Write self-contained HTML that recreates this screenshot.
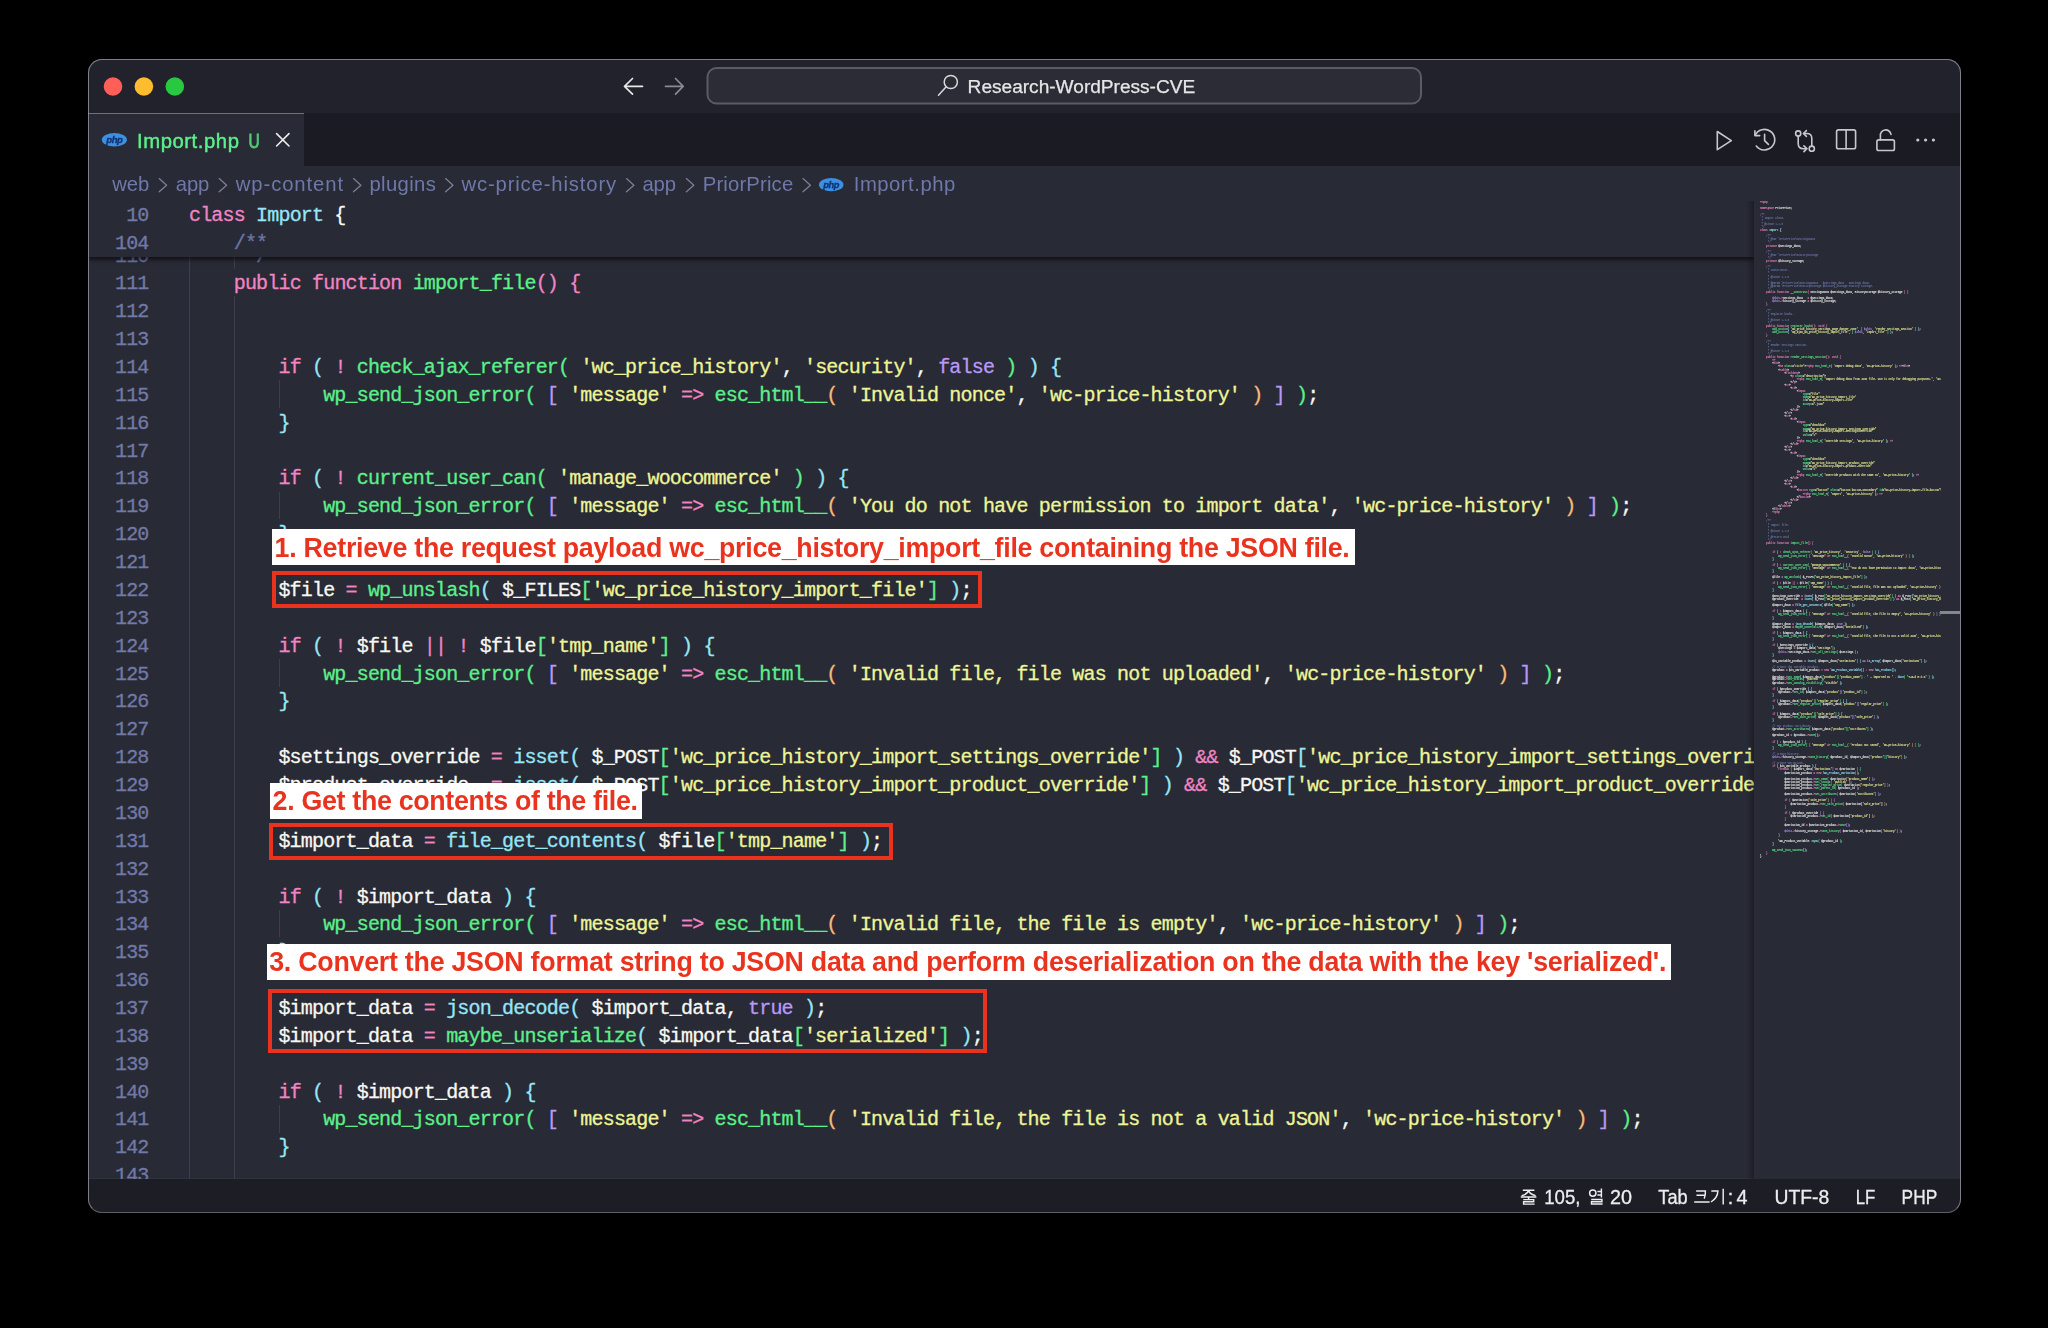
<!DOCTYPE html><html><head><meta charset="utf-8"><style>
html,body{margin:0;padding:0;background:#000;width:2048px;height:1328px;overflow:hidden}
#win{position:absolute;left:87.5px;top:59px;width:1873px;height:1154px;border-radius:14px;overflow:hidden;background:#282A36}
.abs{position:absolute}
.cl{position:absolute;left:101.50px;height:27.87px;line-height:27.87px;font-family:"Liberation Mono",monospace;font-size:20.000px;color:#F8F8F2;white-space:pre;letter-spacing:-0.822px;-webkit-text-stroke:0.3px currentColor}
.ln{position:absolute;width:60px;text-align:right;height:27.87px;line-height:27.87px;font-family:"Liberation Mono",monospace;font-size:20.000px;color:#7279A6;white-space:pre;letter-spacing:-0.822px;-webkit-text-stroke:0.3px currentColor}
svg{position:absolute;left:0;top:0}
</style></head><body>

<div id="win">
<div class="abs" style="left:0;top:0;width:1873px;height:54.3px;background:#21222C"></div>
<div class="abs" style="left:0;top:54.3px;width:1873px;height:53.0px;background:#1B1C23"></div>
<div class="abs" style="left:0;top:54.0px;width:216.5px;height:53.3px;background:#282A36;border-top:1.5px solid #9A5A88;box-sizing:border-box"></div>
<div class="abs" style="left:0;top:1120.2px;width:1873px;height:33.8px;background:#1C1D25"></div>
<div class="abs" style="left:0;top:1119.3px;width:1873px;height:1px;background:#30323D"></div>
</div>
<div id="editor" class="abs" style="left:88px;top:201.3px;width:1665.9px;height:977.9px;overflow:hidden">
<div class="abs" style="left:101.30px;top:-1.80px;width:1px;height:993.70px;background:#3B3E4F"></div>
<div class="abs" style="left:145.90px;top:39.43px;width:1px;height:27.87px;background:#3B3E4F"></div>
<div class="abs" style="left:145.90px;top:95.17px;width:1px;height:896.73px;background:#3B3E4F"></div>
<div class="abs" style="left:190.60px;top:178.78px;width:1px;height:27.87px;background:#3B3E4F"></div>
<div class="abs" style="left:190.60px;top:290.26px;width:1px;height:27.87px;background:#3B3E4F"></div>
<div class="abs" style="left:190.60px;top:457.48px;width:1px;height:27.87px;background:#3B3E4F"></div>
<div class="abs" style="left:190.60px;top:708.31px;width:1px;height:27.87px;background:#3B3E4F"></div>
<div class="abs" style="left:190.60px;top:903.40px;width:1px;height:27.87px;background:#3B3E4F"></div>
<div class="cl" style="left:101.00px;top:41.23px"><span style="color:#6C76A8">     */</span></div>
<div class="ln" style="left:0.50px;top:41.23px">110</div>
<div class="cl" style="left:101.00px;top:69.10px">    <span style="color:#F284C4">public</span> <span style="color:#F284C4">function</span> <span style="color:#5CF08A">import_file</span><span style="color:#F284C4">()</span> <span style="color:#F284C4">{</span></div>
<div class="ln" style="left:0.50px;top:69.10px">111</div>
<div class="cl" style="left:101.00px;top:96.97px"></div>
<div class="ln" style="left:0.50px;top:96.97px">112</div>
<div class="cl" style="left:101.00px;top:124.84px"></div>
<div class="ln" style="left:0.50px;top:124.84px">113</div>
<div class="cl" style="left:101.00px;top:152.71px">        <span style="color:#F284C4">if</span> <span style="color:#96E6F6">(</span> <span style="color:#F284C4">!</span> <span style="color:#5CF08A">check_ajax_referer(</span> <span style="color:#EEF597">&#x27;wc_price_history&#x27;</span>, <span style="color:#EEF597">&#x27;security&#x27;</span>, <span style="color:#BA98F6">false</span> <span style="color:#5CF08A">)</span> <span style="color:#96E6F6">)</span> <span style="color:#96E6F6">{</span></div>
<div class="ln" style="left:0.50px;top:152.71px">114</div>
<div class="cl" style="left:101.00px;top:180.58px">            <span style="color:#5CF08A">wp_send_json_error(</span> <span style="color:#BA98F6">[</span> <span style="color:#EEF597">&#x27;message&#x27;</span> <span style="color:#F284C4">=&gt;</span> <span style="color:#5CF08A">esc_html__</span><span style="color:#F9BA76">(</span> <span style="color:#EEF597">&#x27;Invalid nonce&#x27;</span>, <span style="color:#EEF597">&#x27;wc-price-history&#x27;</span> <span style="color:#F9BA76">)</span> <span style="color:#BA98F6">]</span> <span style="color:#5CF08A">)</span>;</div>
<div class="ln" style="left:0.50px;top:180.58px">115</div>
<div class="cl" style="left:101.00px;top:208.45px">        <span style="color:#96E6F6">}</span></div>
<div class="ln" style="left:0.50px;top:208.45px">116</div>
<div class="cl" style="left:101.00px;top:236.32px"></div>
<div class="ln" style="left:0.50px;top:236.32px">117</div>
<div class="cl" style="left:101.00px;top:264.19px">        <span style="color:#F284C4">if</span> <span style="color:#96E6F6">(</span> <span style="color:#F284C4">!</span> <span style="color:#5CF08A">current_user_can(</span> <span style="color:#EEF597">&#x27;manage_woocommerce&#x27;</span> <span style="color:#5CF08A">)</span> <span style="color:#96E6F6">)</span> <span style="color:#96E6F6">{</span></div>
<div class="ln" style="left:0.50px;top:264.19px">118</div>
<div class="cl" style="left:101.00px;top:292.06px">            <span style="color:#5CF08A">wp_send_json_error(</span> <span style="color:#BA98F6">[</span> <span style="color:#EEF597">&#x27;message&#x27;</span> <span style="color:#F284C4">=&gt;</span> <span style="color:#5CF08A">esc_html__</span><span style="color:#F9BA76">(</span> <span style="color:#EEF597">&#x27;You do not have permission to import data&#x27;</span>, <span style="color:#EEF597">&#x27;wc-price-history&#x27;</span> <span style="color:#F9BA76">)</span> <span style="color:#BA98F6">]</span> <span style="color:#5CF08A">)</span>;</div>
<div class="ln" style="left:0.50px;top:292.06px">119</div>
<div class="cl" style="left:101.00px;top:319.93px">        <span style="color:#96E6F6">}</span></div>
<div class="ln" style="left:0.50px;top:319.93px">120</div>
<div class="cl" style="left:101.00px;top:347.80px"></div>
<div class="ln" style="left:0.50px;top:347.80px">121</div>
<div class="cl" style="left:101.00px;top:375.67px">        $file <span style="color:#F284C4">=</span> <span style="color:#5CF08A">wp_unslash</span><span style="color:#96E6F6">(</span> $_FILES<span style="color:#5CF08A">[</span><span style="color:#EEF597">&#x27;wc_price_history_import_file&#x27;</span><span style="color:#5CF08A">]</span> <span style="color:#96E6F6">)</span>;</div>
<div class="ln" style="left:0.50px;top:375.67px">122</div>
<div class="cl" style="left:101.00px;top:403.54px"></div>
<div class="ln" style="left:0.50px;top:403.54px">123</div>
<div class="cl" style="left:101.00px;top:431.41px">        <span style="color:#F284C4">if</span> <span style="color:#96E6F6">(</span> <span style="color:#F284C4">!</span> $file <span style="color:#F284C4">||</span> <span style="color:#F284C4">!</span> $file<span style="color:#5CF08A">[</span><span style="color:#EEF597">&#x27;tmp_name&#x27;</span><span style="color:#5CF08A">]</span> <span style="color:#96E6F6">)</span> <span style="color:#96E6F6">{</span></div>
<div class="ln" style="left:0.50px;top:431.41px">124</div>
<div class="cl" style="left:101.00px;top:459.28px">            <span style="color:#5CF08A">wp_send_json_error(</span> <span style="color:#BA98F6">[</span> <span style="color:#EEF597">&#x27;message&#x27;</span> <span style="color:#F284C4">=&gt;</span> <span style="color:#5CF08A">esc_html__</span><span style="color:#F9BA76">(</span> <span style="color:#EEF597">&#x27;Invalid file, file was not uploaded&#x27;</span>, <span style="color:#EEF597">&#x27;wc-price-history&#x27;</span> <span style="color:#F9BA76">)</span> <span style="color:#BA98F6">]</span> <span style="color:#5CF08A">)</span>;</div>
<div class="ln" style="left:0.50px;top:459.28px">125</div>
<div class="cl" style="left:101.00px;top:487.15px">        <span style="color:#96E6F6">}</span></div>
<div class="ln" style="left:0.50px;top:487.15px">126</div>
<div class="cl" style="left:101.00px;top:515.02px"></div>
<div class="ln" style="left:0.50px;top:515.02px">127</div>
<div class="cl" style="left:101.00px;top:542.89px">        $settings_override <span style="color:#F284C4">=</span> <span style="color:#96E6F6">isset(</span> $_POST<span style="color:#5CF08A">[</span><span style="color:#EEF597">&#x27;wc_price_history_import_settings_override&#x27;</span><span style="color:#5CF08A">]</span> <span style="color:#96E6F6">)</span> <span style="color:#F284C4">&amp;&amp;</span> $_POST<span style="color:#96E6F6">[</span><span style="color:#EEF597">&#x27;wc_price_history_import_settings_override&#x27;</span><span style="color:#96E6F6">]</span> <span style="color:#F284C4">===</span> <span style="color:#EEF597">&#x27;1&#x27;</span>;</div>
<div class="ln" style="left:0.50px;top:542.89px">128</div>
<div class="cl" style="left:101.00px;top:570.76px">        $product_override  <span style="color:#F284C4">=</span> <span style="color:#96E6F6">isset(</span> $_POST<span style="color:#5CF08A">[</span><span style="color:#EEF597">&#x27;wc_price_history_import_product_override&#x27;</span><span style="color:#5CF08A">]</span> <span style="color:#96E6F6">)</span> <span style="color:#F284C4">&amp;&amp;</span> $_POST<span style="color:#96E6F6">[</span><span style="color:#EEF597">&#x27;wc_price_history_import_product_override&#x27;</span><span style="color:#96E6F6">]</span> <span style="color:#F284C4">===</span> <span style="color:#EEF597">&#x27;1&#x27;</span>;</div>
<div class="ln" style="left:0.50px;top:570.76px">129</div>
<div class="cl" style="left:101.00px;top:598.63px"></div>
<div class="ln" style="left:0.50px;top:598.63px">130</div>
<div class="cl" style="left:101.00px;top:626.50px">        $import_data <span style="color:#F284C4">=</span> <span style="color:#96E6F6">file_get_contents(</span> $file<span style="color:#5CF08A">[</span><span style="color:#EEF597">&#x27;tmp_name&#x27;</span><span style="color:#5CF08A">]</span> <span style="color:#96E6F6">)</span>;</div>
<div class="ln" style="left:0.50px;top:626.50px">131</div>
<div class="cl" style="left:101.00px;top:654.37px"></div>
<div class="ln" style="left:0.50px;top:654.37px">132</div>
<div class="cl" style="left:101.00px;top:682.24px">        <span style="color:#F284C4">if</span> <span style="color:#96E6F6">(</span> <span style="color:#F284C4">!</span> $import_data <span style="color:#96E6F6">)</span> <span style="color:#96E6F6">{</span></div>
<div class="ln" style="left:0.50px;top:682.24px">133</div>
<div class="cl" style="left:101.00px;top:710.11px">            <span style="color:#5CF08A">wp_send_json_error(</span> <span style="color:#BA98F6">[</span> <span style="color:#EEF597">&#x27;message&#x27;</span> <span style="color:#F284C4">=&gt;</span> <span style="color:#5CF08A">esc_html__</span><span style="color:#F9BA76">(</span> <span style="color:#EEF597">&#x27;Invalid file, the file is empty&#x27;</span>, <span style="color:#EEF597">&#x27;wc-price-history&#x27;</span> <span style="color:#F9BA76">)</span> <span style="color:#BA98F6">]</span> <span style="color:#5CF08A">)</span>;</div>
<div class="ln" style="left:0.50px;top:710.11px">134</div>
<div class="cl" style="left:101.00px;top:737.98px">        <span style="color:#96E6F6">}</span></div>
<div class="ln" style="left:0.50px;top:737.98px">135</div>
<div class="cl" style="left:101.00px;top:765.85px"></div>
<div class="ln" style="left:0.50px;top:765.85px">136</div>
<div class="cl" style="left:101.00px;top:793.72px">        $import_data <span style="color:#F284C4">=</span> <span style="color:#96E6F6">json_decode(</span> $import_data, <span style="color:#BA98F6">true</span> <span style="color:#96E6F6">)</span>;</div>
<div class="ln" style="left:0.50px;top:793.72px">137</div>
<div class="cl" style="left:101.00px;top:821.59px">        $import_data <span style="color:#F284C4">=</span> <span style="color:#5CF08A">maybe_unserialize</span><span style="color:#96E6F6">(</span> $import_data<span style="color:#5CF08A">[</span><span style="color:#EEF597">&#x27;serialized&#x27;</span><span style="color:#5CF08A">]</span> <span style="color:#96E6F6">)</span>;</div>
<div class="ln" style="left:0.50px;top:821.59px">138</div>
<div class="cl" style="left:101.00px;top:849.46px"></div>
<div class="ln" style="left:0.50px;top:849.46px">139</div>
<div class="cl" style="left:101.00px;top:877.33px">        <span style="color:#F284C4">if</span> <span style="color:#96E6F6">(</span> <span style="color:#F284C4">!</span> $import_data <span style="color:#96E6F6">)</span> <span style="color:#96E6F6">{</span></div>
<div class="ln" style="left:0.50px;top:877.33px">140</div>
<div class="cl" style="left:101.00px;top:905.20px">            <span style="color:#5CF08A">wp_send_json_error(</span> <span style="color:#BA98F6">[</span> <span style="color:#EEF597">&#x27;message&#x27;</span> <span style="color:#F284C4">=&gt;</span> <span style="color:#5CF08A">esc_html__</span><span style="color:#F9BA76">(</span> <span style="color:#EEF597">&#x27;Invalid file, the file is not a valid JSON&#x27;</span>, <span style="color:#EEF597">&#x27;wc-price-history&#x27;</span> <span style="color:#F9BA76">)</span> <span style="color:#BA98F6">]</span> <span style="color:#5CF08A">)</span>;</div>
<div class="ln" style="left:0.50px;top:905.20px">141</div>
<div class="cl" style="left:101.00px;top:933.07px">        <span style="color:#96E6F6">}</span></div>
<div class="ln" style="left:0.50px;top:933.07px">142</div>
<div class="cl" style="left:101.00px;top:960.94px"></div>
<div class="ln" style="left:0.50px;top:960.94px">143</div>
<div class="abs" style="left:0;top:0;width:1665.9px;height:55.7px;background:#282A36;box-shadow:0 3px 4px rgba(0,0,0,0.55)"></div>
<div class="cl" style="left:101.00px;top:0.80px"><span style="color:#F284C4">class</span> <span style="color:#96E6F6">Import</span> {</div>
<div class="ln" style="left:0.50px;top:0.80px">10</div>
<div class="cl" style="left:101.00px;top:28.65px">    <span style="color:#6C76A8">/**</span></div>
<div class="ln" style="left:0.50px;top:28.65px">104</div>
</div>
<div class="abs" style="left:1753.9px;top:201.3px;width:187.1px;height:977.9px;background:#282A36;overflow:hidden">
<div class="abs" style="left:6.10px;top:-1.68px;width:1300px;transform-origin:0 0;opacity:0.85;transform:scale(0.13685,0.16500)">
<div class="cl" style="left:0;top:0.00px;-webkit-text-stroke:1px currentColor"><span style="color:#F284C4">&lt;?php</span></div>
<div class="cl" style="left:0;top:18.79px;-webkit-text-stroke:1px currentColor"></div>
<div class="cl" style="left:0;top:37.58px;-webkit-text-stroke:1px currentColor"><span style="color:#F284C4">namespace</span> PriorPrice;</div>
<div class="cl" style="left:0;top:56.36px;-webkit-text-stroke:1px currentColor"></div>
<div class="cl" style="left:0;top:75.15px;-webkit-text-stroke:1px currentColor"><span style="color:#6C76A8">/**</span></div>
<div class="cl" style="left:0;top:93.94px;-webkit-text-stroke:1px currentColor"><span style="color:#6C76A8"> * Import class.</span></div>
<div class="cl" style="left:0;top:112.73px;-webkit-text-stroke:1px currentColor"><span style="color:#6C76A8"> *</span></div>
<div class="cl" style="left:0;top:131.52px;-webkit-text-stroke:1px currentColor"><span style="color:#6C76A8"> * @since 1.1.0</span></div>
<div class="cl" style="left:0;top:150.30px;-webkit-text-stroke:1px currentColor"><span style="color:#6C76A8"> */</span></div>
<div class="cl" style="left:0;top:169.09px;-webkit-text-stroke:1px currentColor"><span style="color:#F284C4">class</span> <span style="color:#96E6F6">Import</span> {</div>
<div class="cl" style="left:0;top:187.88px;-webkit-text-stroke:1px currentColor"></div>
<div class="cl" style="left:0;top:206.67px;-webkit-text-stroke:1px currentColor">    <span style="color:#6C76A8">/**</span></div>
<div class="cl" style="left:0;top:225.45px;-webkit-text-stroke:1px currentColor"><span style="color:#6C76A8">     * @var \PriorPrice\SettingsData</span></div>
<div class="cl" style="left:0;top:244.24px;-webkit-text-stroke:1px currentColor"><span style="color:#6C76A8">     */</span></div>
<div class="cl" style="left:0;top:263.03px;-webkit-text-stroke:1px currentColor">    <span style="color:#F284C4">private</span> $settings_data;</div>
<div class="cl" style="left:0;top:281.82px;-webkit-text-stroke:1px currentColor"></div>
<div class="cl" style="left:0;top:300.61px;-webkit-text-stroke:1px currentColor">    <span style="color:#6C76A8">/**</span></div>
<div class="cl" style="left:0;top:319.39px;-webkit-text-stroke:1px currentColor"><span style="color:#6C76A8">     * @var \PriorPrice\HistoryStorage</span></div>
<div class="cl" style="left:0;top:338.18px;-webkit-text-stroke:1px currentColor"><span style="color:#6C76A8">     */</span></div>
<div class="cl" style="left:0;top:356.97px;-webkit-text-stroke:1px currentColor">    <span style="color:#F284C4">private</span> $history_storage;</div>
<div class="cl" style="left:0;top:375.76px;-webkit-text-stroke:1px currentColor"></div>
<div class="cl" style="left:0;top:394.55px;-webkit-text-stroke:1px currentColor">    <span style="color:#6C76A8">/**</span></div>
<div class="cl" style="left:0;top:413.33px;-webkit-text-stroke:1px currentColor"><span style="color:#6C76A8">     * Constructor.</span></div>
<div class="cl" style="left:0;top:432.12px;-webkit-text-stroke:1px currentColor"><span style="color:#6C76A8">     *</span></div>
<div class="cl" style="left:0;top:450.91px;-webkit-text-stroke:1px currentColor"><span style="color:#6C76A8">     * @since 1.1.0</span></div>
<div class="cl" style="left:0;top:469.70px;-webkit-text-stroke:1px currentColor"><span style="color:#6C76A8">     *</span></div>
<div class="cl" style="left:0;top:488.48px;-webkit-text-stroke:1px currentColor"><span style="color:#6C76A8">     * @param \PriorPrice\SettingsData   $settings_data   Settings data.</span></div>
<div class="cl" style="left:0;top:507.27px;-webkit-text-stroke:1px currentColor"><span style="color:#6C76A8">     * @param \PriorPrice\HistoryStorage $history_storage History storage.</span></div>
<div class="cl" style="left:0;top:526.06px;-webkit-text-stroke:1px currentColor"><span style="color:#6C76A8">     */</span></div>
<div class="cl" style="left:0;top:544.85px;-webkit-text-stroke:1px currentColor">    <span style="color:#F284C4">public</span> <span style="color:#F284C4">function</span> <span style="color:#5CF08A">__construct</span><span style="color:#F284C4">(</span> SettingsData $settings_data, HistoryStorage $history_storage <span style="color:#F284C4">)</span> <span style="color:#F284C4">{</span></div>
<div class="cl" style="left:0;top:563.64px;-webkit-text-stroke:1px currentColor"></div>
<div class="cl" style="left:0;top:582.42px;-webkit-text-stroke:1px currentColor">        <span style="color:#BA98F6">$this</span><span style="color:#F284C4">-&gt;</span>settings_data   <span style="color:#F284C4">=</span> $settings_data;</div>
<div class="cl" style="left:0;top:601.21px;-webkit-text-stroke:1px currentColor">        <span style="color:#BA98F6">$this</span><span style="color:#F284C4">-&gt;</span>history_storage <span style="color:#F284C4">=</span> $history_storage;</div>
<div class="cl" style="left:0;top:620.00px;-webkit-text-stroke:1px currentColor">    <span style="color:#F284C4">}</span></div>
<div class="cl" style="left:0;top:638.79px;-webkit-text-stroke:1px currentColor"></div>
<div class="cl" style="left:0;top:657.58px;-webkit-text-stroke:1px currentColor">    <span style="color:#6C76A8">/**</span></div>
<div class="cl" style="left:0;top:676.36px;-webkit-text-stroke:1px currentColor"><span style="color:#6C76A8">     * Register hooks.</span></div>
<div class="cl" style="left:0;top:695.15px;-webkit-text-stroke:1px currentColor"><span style="color:#6C76A8">     *</span></div>
<div class="cl" style="left:0;top:713.94px;-webkit-text-stroke:1px currentColor"><span style="color:#6C76A8">     * @since 1.1.0</span></div>
<div class="cl" style="left:0;top:732.73px;-webkit-text-stroke:1px currentColor"><span style="color:#6C76A8">     */</span></div>
<div class="cl" style="left:0;top:751.52px;-webkit-text-stroke:1px currentColor">    <span style="color:#F284C4">public</span> <span style="color:#F284C4">function</span> <span style="color:#5CF08A">register_hooks</span><span style="color:#F284C4">():</span> <span style="color:#F284C4">void</span> <span style="color:#F284C4">{</span></div>
<div class="cl" style="left:0;top:770.30px;-webkit-text-stroke:1px currentColor">        <span style="color:#5CF08A">add_action</span><span style="color:#96E6F6">(</span> <span style="color:#EEF597">&#x27;wc_price_history_settings_page_danger_zone&#x27;</span>, <span style="color:#5CF08A">[</span> <span style="color:#BA98F6">$this</span>, <span style="color:#EEF597">&#x27;render_settings_section&#x27;</span> <span style="color:#5CF08A">]</span> <span style="color:#96E6F6">)</span>;</div>
<div class="cl" style="left:0;top:789.09px;-webkit-text-stroke:1px currentColor">        <span style="color:#5CF08A">add_action</span><span style="color:#96E6F6">(</span> <span style="color:#EEF597">&#x27;wp_ajax_wc_price_history_import_file&#x27;</span>, <span style="color:#5CF08A">[</span> <span style="color:#BA98F6">$this</span>, <span style="color:#EEF597">&#x27;import_file&#x27;</span> <span style="color:#5CF08A">]</span> <span style="color:#96E6F6">)</span>;</div>
<div class="cl" style="left:0;top:807.88px;-webkit-text-stroke:1px currentColor">    <span style="color:#F284C4">}</span></div>
<div class="cl" style="left:0;top:826.67px;-webkit-text-stroke:1px currentColor"></div>
<div class="cl" style="left:0;top:845.45px;-webkit-text-stroke:1px currentColor">    <span style="color:#6C76A8">/**</span></div>
<div class="cl" style="left:0;top:864.24px;-webkit-text-stroke:1px currentColor"><span style="color:#6C76A8">     * Render settings section.</span></div>
<div class="cl" style="left:0;top:883.03px;-webkit-text-stroke:1px currentColor"><span style="color:#6C76A8">     *</span></div>
<div class="cl" style="left:0;top:901.82px;-webkit-text-stroke:1px currentColor"><span style="color:#6C76A8">     * @since 1.1.0</span></div>
<div class="cl" style="left:0;top:920.61px;-webkit-text-stroke:1px currentColor"><span style="color:#6C76A8">     */</span></div>
<div class="cl" style="left:0;top:939.39px;-webkit-text-stroke:1px currentColor">    <span style="color:#F284C4">public</span> <span style="color:#F284C4">function</span> <span style="color:#5CF08A">render_settings_section</span><span style="color:#F284C4">():</span> <span style="color:#F284C4">void</span> <span style="color:#F284C4">{</span></div>
<div class="cl" style="left:0;top:958.18px;-webkit-text-stroke:1px currentColor">        <span style="color:#F284C4">?&gt;</span></div>
<div class="cl" style="left:0;top:976.97px;-webkit-text-stroke:1px currentColor">        &lt;<span style="color:#F284C4">div</span>&gt;</div>
<div class="cl" style="left:0;top:995.76px;-webkit-text-stroke:1px currentColor">            &lt;<span style="color:#F284C4">h3</span> <span style="color:#5CF08A">class</span>=<span style="color:#EEF597">&quot;title&quot;</span>&gt;<span style="color:#F284C4">&lt;?php</span> <span style="color:#5CF08A">esc_html_e</span><span style="color:#96E6F6">(</span> <span style="color:#EEF597">&#x27;Import debug data&#x27;</span>, <span style="color:#EEF597">&#x27;wc-price-history&#x27;</span> <span style="color:#96E6F6">)</span>; <span style="color:#F284C4">?&gt;</span>&lt;/<span style="color:#F284C4">h3</span>&gt;</div>
<div class="cl" style="left:0;top:1014.55px;-webkit-text-stroke:1px currentColor">            &lt;<span style="color:#F284C4">table</span>&gt;</div>
<div class="cl" style="left:0;top:1033.33px;-webkit-text-stroke:1px currentColor">                &lt;<span style="color:#F284C4">fieldset</span>&gt;</div>
<div class="cl" style="left:0;top:1052.12px;-webkit-text-stroke:1px currentColor">                    &lt;<span style="color:#F284C4">p</span> <span style="color:#5CF08A">class</span>=<span style="color:#EEF597">&quot;description&quot;</span>&gt;</div>
<div class="cl" style="left:0;top:1070.91px;-webkit-text-stroke:1px currentColor">                        <span style="color:#F284C4">&lt;?php</span> <span style="color:#5CF08A">esc_html_e</span><span style="color:#96E6F6">(</span> <span style="color:#EEF597">&#x27;Import debug data from JSON file. Use it only for debugging purposes.&#x27;</span>, <span style="color:#EEF597">&#x27;wc-price-history&#x27;</span> <span style="color:#96E6F6">)</span>; <span style="color:#F284C4">?&gt;</span></div>
<div class="cl" style="left:0;top:1089.70px;-webkit-text-stroke:1px currentColor">                    &lt;/<span style="color:#F284C4">p</span>&gt;</div>
<div class="cl" style="left:0;top:1108.48px;-webkit-text-stroke:1px currentColor">                &lt;<span style="color:#F284C4">tr</span>&gt;</div>
<div class="cl" style="left:0;top:1127.27px;-webkit-text-stroke:1px currentColor">                    &lt;<span style="color:#F284C4">td</span>&gt;</div>
<div class="cl" style="left:0;top:1146.06px;-webkit-text-stroke:1px currentColor">                        &lt;<span style="color:#F284C4">input</span></div>
<div class="cl" style="left:0;top:1164.85px;-webkit-text-stroke:1px currentColor">                            <span style="color:#5CF08A">type</span>=<span style="color:#EEF597">&quot;file&quot;</span></div>
<div class="cl" style="left:0;top:1183.64px;-webkit-text-stroke:1px currentColor">                            <span style="color:#5CF08A">name</span>=<span style="color:#EEF597">&quot;wc_price_history_import_file&quot;</span></div>
<div class="cl" style="left:0;top:1202.42px;-webkit-text-stroke:1px currentColor">                            <span style="color:#5CF08A">id</span>=<span style="color:#EEF597">&quot;wc-price-history-import-file&quot;</span></div>
<div class="cl" style="left:0;top:1221.21px;-webkit-text-stroke:1px currentColor">                            <span style="color:#5CF08A">accept</span>=<span style="color:#EEF597">&quot;.json&quot;</span></div>
<div class="cl" style="left:0;top:1240.00px;-webkit-text-stroke:1px currentColor">                        /&gt;</div>
<div class="cl" style="left:0;top:1258.79px;-webkit-text-stroke:1px currentColor">                    &lt;/<span style="color:#F284C4">td</span>&gt;</div>
<div class="cl" style="left:0;top:1277.58px;-webkit-text-stroke:1px currentColor">                &lt;/<span style="color:#F284C4">tr</span>&gt;</div>
<div class="cl" style="left:0;top:1296.36px;-webkit-text-stroke:1px currentColor">                &lt;<span style="color:#F284C4">tr</span>&gt;</div>
<div class="cl" style="left:0;top:1315.15px;-webkit-text-stroke:1px currentColor">                    &lt;<span style="color:#F284C4">td</span>&gt;</div>
<div class="cl" style="left:0;top:1333.94px;-webkit-text-stroke:1px currentColor">                        &lt;<span style="color:#F284C4">input</span></div>
<div class="cl" style="left:0;top:1352.73px;-webkit-text-stroke:1px currentColor">                            <span style="color:#5CF08A">type</span>=<span style="color:#EEF597">&quot;checkbox&quot;</span></div>
<div class="cl" style="left:0;top:1371.52px;-webkit-text-stroke:1px currentColor">                            <span style="color:#5CF08A">name</span>=<span style="color:#EEF597">&quot;wc_price_history_import_settings_override&quot;</span></div>
<div class="cl" style="left:0;top:1390.30px;-webkit-text-stroke:1px currentColor">                            <span style="color:#5CF08A">id</span>=<span style="color:#EEF597">&quot;wc-price-history-import-settings-override&quot;</span></div>
<div class="cl" style="left:0;top:1409.09px;-webkit-text-stroke:1px currentColor">                            <span style="color:#5CF08A">value</span>=<span style="color:#EEF597">&quot;1&quot;</span></div>
<div class="cl" style="left:0;top:1427.88px;-webkit-text-stroke:1px currentColor">                        /&gt;</div>
<div class="cl" style="left:0;top:1446.67px;-webkit-text-stroke:1px currentColor">                        <span style="color:#F284C4">&lt;?php</span> <span style="color:#5CF08A">esc_html_e</span><span style="color:#96E6F6">(</span> <span style="color:#EEF597">&#x27;Override settings&#x27;</span>, <span style="color:#EEF597">&#x27;wc-price-history&#x27;</span> <span style="color:#96E6F6">)</span>; <span style="color:#F284C4">?&gt;</span></div>
<div class="cl" style="left:0;top:1465.45px;-webkit-text-stroke:1px currentColor">                    &lt;/<span style="color:#F284C4">td</span>&gt;</div>
<div class="cl" style="left:0;top:1484.24px;-webkit-text-stroke:1px currentColor">                &lt;/<span style="color:#F284C4">tr</span>&gt;</div>
<div class="cl" style="left:0;top:1503.03px;-webkit-text-stroke:1px currentColor">                &lt;<span style="color:#F284C4">tr</span>&gt;</div>
<div class="cl" style="left:0;top:1521.82px;-webkit-text-stroke:1px currentColor">                    &lt;<span style="color:#F284C4">td</span>&gt;</div>
<div class="cl" style="left:0;top:1540.61px;-webkit-text-stroke:1px currentColor">                        &lt;<span style="color:#F284C4">input</span></div>
<div class="cl" style="left:0;top:1559.39px;-webkit-text-stroke:1px currentColor">                            <span style="color:#5CF08A">type</span>=<span style="color:#EEF597">&quot;checkbox&quot;</span></div>
<div class="cl" style="left:0;top:1578.18px;-webkit-text-stroke:1px currentColor">                            <span style="color:#5CF08A">name</span>=<span style="color:#EEF597">&quot;wc_price_history_import_product_override&quot;</span></div>
<div class="cl" style="left:0;top:1596.97px;-webkit-text-stroke:1px currentColor">                            <span style="color:#5CF08A">id</span>=<span style="color:#EEF597">&quot;wc-price-history-import-product-override&quot;</span></div>
<div class="cl" style="left:0;top:1615.76px;-webkit-text-stroke:1px currentColor">                            <span style="color:#5CF08A">value</span>=<span style="color:#EEF597">&quot;1&quot;</span></div>
<div class="cl" style="left:0;top:1634.55px;-webkit-text-stroke:1px currentColor">                        /&gt;</div>
<div class="cl" style="left:0;top:1653.33px;-webkit-text-stroke:1px currentColor">                        <span style="color:#F284C4">&lt;?php</span> <span style="color:#5CF08A">esc_html_e</span><span style="color:#96E6F6">(</span> <span style="color:#EEF597">&#x27;Override products with the same ID&#x27;</span>, <span style="color:#EEF597">&#x27;wc-price-history&#x27;</span> <span style="color:#96E6F6">)</span>; <span style="color:#F284C4">?&gt;</span></div>
<div class="cl" style="left:0;top:1672.12px;-webkit-text-stroke:1px currentColor">                    &lt;/<span style="color:#F284C4">td</span>&gt;</div>
<div class="cl" style="left:0;top:1690.91px;-webkit-text-stroke:1px currentColor">                &lt;/<span style="color:#F284C4">tr</span>&gt;</div>
<div class="cl" style="left:0;top:1709.70px;-webkit-text-stroke:1px currentColor">                &lt;<span style="color:#F284C4">tr</span>&gt;</div>
<div class="cl" style="left:0;top:1728.48px;-webkit-text-stroke:1px currentColor">                    &lt;<span style="color:#F284C4">td</span>&gt;</div>
<div class="cl" style="left:0;top:1747.27px;-webkit-text-stroke:1px currentColor">                        &lt;<span style="color:#F284C4">button</span> <span style="color:#5CF08A">type</span>=<span style="color:#EEF597">&quot;button&quot;</span> <span style="color:#5CF08A">class</span>=<span style="color:#EEF597">&quot;button button-secondary&quot;</span> <span style="color:#5CF08A">id</span>=<span style="color:#EEF597">&quot;wc-price-history-import-file-button&quot;</span>&gt;</div>
<div class="cl" style="left:0;top:1766.06px;-webkit-text-stroke:1px currentColor">                            <span style="color:#F284C4">&lt;?php</span> <span style="color:#5CF08A">esc_html_e</span><span style="color:#96E6F6">(</span> <span style="color:#EEF597">&#x27;Import&#x27;</span>, <span style="color:#EEF597">&#x27;wc-price-history&#x27;</span> <span style="color:#96E6F6">)</span>; <span style="color:#F284C4">?&gt;</span></div>
<div class="cl" style="left:0;top:1784.85px;-webkit-text-stroke:1px currentColor">                        &lt;/<span style="color:#F284C4">button</span>&gt;</div>
<div class="cl" style="left:0;top:1803.64px;-webkit-text-stroke:1px currentColor">                    &lt;/<span style="color:#F284C4">td</span>&gt;</div>
<div class="cl" style="left:0;top:1822.42px;-webkit-text-stroke:1px currentColor">                &lt;/<span style="color:#F284C4">tr</span>&gt;</div>
<div class="cl" style="left:0;top:1841.21px;-webkit-text-stroke:1px currentColor">            &lt;/<span style="color:#F284C4">table</span>&gt;</div>
<div class="cl" style="left:0;top:1860.00px;-webkit-text-stroke:1px currentColor">        &lt;/<span style="color:#F284C4">div</span>&gt;</div>
<div class="cl" style="left:0;top:1878.79px;-webkit-text-stroke:1px currentColor">        <span style="color:#F284C4">&lt;?php</span></div>
<div class="cl" style="left:0;top:1897.58px;-webkit-text-stroke:1px currentColor">    <span style="color:#F284C4">}</span></div>
<div class="cl" style="left:0;top:1916.36px;-webkit-text-stroke:1px currentColor"></div>
<div class="cl" style="left:0;top:1935.15px;-webkit-text-stroke:1px currentColor">    <span style="color:#6C76A8">/**</span></div>
<div class="cl" style="left:0;top:1953.94px;-webkit-text-stroke:1px currentColor"><span style="color:#6C76A8">     * Import file.</span></div>
<div class="cl" style="left:0;top:1972.73px;-webkit-text-stroke:1px currentColor"><span style="color:#6C76A8">     *</span></div>
<div class="cl" style="left:0;top:1991.52px;-webkit-text-stroke:1px currentColor"><span style="color:#6C76A8">     * @since 1.1.0</span></div>
<div class="cl" style="left:0;top:2010.30px;-webkit-text-stroke:1px currentColor"><span style="color:#6C76A8">     *</span></div>
<div class="cl" style="left:0;top:2029.09px;-webkit-text-stroke:1px currentColor"><span style="color:#6C76A8">     * @return void</span></div>
<div class="cl" style="left:0;top:2047.88px;-webkit-text-stroke:1px currentColor"><span style="color:#6C76A8">     */</span></div>
<div class="cl" style="left:0;top:2066.67px;-webkit-text-stroke:1px currentColor">    <span style="color:#F284C4">public</span> <span style="color:#F284C4">function</span> <span style="color:#5CF08A">import_file</span><span style="color:#F284C4">()</span> <span style="color:#F284C4">{</span></div>
<div class="cl" style="left:0;top:2085.45px;-webkit-text-stroke:1px currentColor"></div>
<div class="cl" style="left:0;top:2104.24px;-webkit-text-stroke:1px currentColor"></div>
<div class="cl" style="left:0;top:2123.03px;-webkit-text-stroke:1px currentColor">        <span style="color:#F284C4">if</span> <span style="color:#96E6F6">(</span> <span style="color:#F284C4">!</span> <span style="color:#5CF08A">check_ajax_referer(</span> <span style="color:#EEF597">&#x27;wc_price_history&#x27;</span>, <span style="color:#EEF597">&#x27;security&#x27;</span>, <span style="color:#BA98F6">false</span> <span style="color:#5CF08A">)</span> <span style="color:#96E6F6">)</span> <span style="color:#96E6F6">{</span></div>
<div class="cl" style="left:0;top:2141.82px;-webkit-text-stroke:1px currentColor">            <span style="color:#5CF08A">wp_send_json_error(</span> <span style="color:#BA98F6">[</span> <span style="color:#EEF597">&#x27;message&#x27;</span> <span style="color:#F284C4">=&gt;</span> <span style="color:#5CF08A">esc_html__</span><span style="color:#F9BA76">(</span> <span style="color:#EEF597">&#x27;Invalid nonce&#x27;</span>, <span style="color:#EEF597">&#x27;wc-price-history&#x27;</span> <span style="color:#F9BA76">)</span> <span style="color:#BA98F6">]</span> <span style="color:#5CF08A">)</span>;</div>
<div class="cl" style="left:0;top:2160.61px;-webkit-text-stroke:1px currentColor">        <span style="color:#96E6F6">}</span></div>
<div class="cl" style="left:0;top:2179.39px;-webkit-text-stroke:1px currentColor"></div>
<div class="cl" style="left:0;top:2198.18px;-webkit-text-stroke:1px currentColor">        <span style="color:#F284C4">if</span> <span style="color:#96E6F6">(</span> <span style="color:#F284C4">!</span> <span style="color:#5CF08A">current_user_can(</span> <span style="color:#EEF597">&#x27;manage_woocommerce&#x27;</span> <span style="color:#5CF08A">)</span> <span style="color:#96E6F6">)</span> <span style="color:#96E6F6">{</span></div>
<div class="cl" style="left:0;top:2216.97px;-webkit-text-stroke:1px currentColor">            <span style="color:#5CF08A">wp_send_json_error(</span> <span style="color:#BA98F6">[</span> <span style="color:#EEF597">&#x27;message&#x27;</span> <span style="color:#F284C4">=&gt;</span> <span style="color:#5CF08A">esc_html__</span><span style="color:#F9BA76">(</span> <span style="color:#EEF597">&#x27;You do not have permission to import data&#x27;</span>, <span style="color:#EEF597">&#x27;wc-price-history&#x27;</span> <span style="color:#F9BA76">)</span> <span style="color:#BA98F6">]</span> <span style="color:#5CF08A">)</span>;</div>
<div class="cl" style="left:0;top:2235.76px;-webkit-text-stroke:1px currentColor">        <span style="color:#96E6F6">}</span></div>
<div class="cl" style="left:0;top:2254.55px;-webkit-text-stroke:1px currentColor"></div>
<div class="cl" style="left:0;top:2273.33px;-webkit-text-stroke:1px currentColor">        $file <span style="color:#F284C4">=</span> <span style="color:#5CF08A">wp_unslash</span><span style="color:#96E6F6">(</span> $_FILES<span style="color:#5CF08A">[</span><span style="color:#EEF597">&#x27;wc_price_history_import_file&#x27;</span><span style="color:#5CF08A">]</span> <span style="color:#96E6F6">)</span>;</div>
<div class="cl" style="left:0;top:2292.12px;-webkit-text-stroke:1px currentColor"></div>
<div class="cl" style="left:0;top:2310.91px;-webkit-text-stroke:1px currentColor">        <span style="color:#F284C4">if</span> <span style="color:#96E6F6">(</span> <span style="color:#F284C4">!</span> $file <span style="color:#F284C4">||</span> <span style="color:#F284C4">!</span> $file<span style="color:#5CF08A">[</span><span style="color:#EEF597">&#x27;tmp_name&#x27;</span><span style="color:#5CF08A">]</span> <span style="color:#96E6F6">)</span> <span style="color:#96E6F6">{</span></div>
<div class="cl" style="left:0;top:2329.70px;-webkit-text-stroke:1px currentColor">            <span style="color:#5CF08A">wp_send_json_error(</span> <span style="color:#BA98F6">[</span> <span style="color:#EEF597">&#x27;message&#x27;</span> <span style="color:#F284C4">=&gt;</span> <span style="color:#5CF08A">esc_html__</span><span style="color:#F9BA76">(</span> <span style="color:#EEF597">&#x27;Invalid file, file was not uploaded&#x27;</span>, <span style="color:#EEF597">&#x27;wc-price-history&#x27;</span> <span style="color:#F9BA76">)</span> <span style="color:#BA98F6">]</span> <span style="color:#5CF08A">)</span>;</div>
<div class="cl" style="left:0;top:2348.48px;-webkit-text-stroke:1px currentColor">        <span style="color:#96E6F6">}</span></div>
<div class="cl" style="left:0;top:2367.27px;-webkit-text-stroke:1px currentColor"></div>
<div class="cl" style="left:0;top:2386.06px;-webkit-text-stroke:1px currentColor">        $settings_override <span style="color:#F284C4">=</span> <span style="color:#96E6F6">isset(</span> $_POST<span style="color:#5CF08A">[</span><span style="color:#EEF597">&#x27;wc_price_history_import_settings_override&#x27;</span><span style="color:#5CF08A">]</span> <span style="color:#96E6F6">)</span> <span style="color:#F284C4">&amp;&amp;</span> $_POST<span style="color:#96E6F6">[</span><span style="color:#EEF597">&#x27;wc_price_history_import_settings_override&#x27;</span><span style="color:#96E6F6">]</span> <span style="color:#F284C4">===</span> <span style="color:#EEF597">&#x27;1&#x27;</span>;</div>
<div class="cl" style="left:0;top:2404.85px;-webkit-text-stroke:1px currentColor">        $product_override  <span style="color:#F284C4">=</span> <span style="color:#96E6F6">isset(</span> $_POST<span style="color:#5CF08A">[</span><span style="color:#EEF597">&#x27;wc_price_history_import_product_override&#x27;</span><span style="color:#5CF08A">]</span> <span style="color:#96E6F6">)</span> <span style="color:#F284C4">&amp;&amp;</span> $_POST<span style="color:#96E6F6">[</span><span style="color:#EEF597">&#x27;wc_price_history_import_product_override&#x27;</span><span style="color:#96E6F6">]</span> <span style="color:#F284C4">===</span> <span style="color:#EEF597">&#x27;1&#x27;</span>;</div>
<div class="cl" style="left:0;top:2423.64px;-webkit-text-stroke:1px currentColor"></div>
<div class="cl" style="left:0;top:2442.42px;-webkit-text-stroke:1px currentColor">        $import_data <span style="color:#F284C4">=</span> <span style="color:#96E6F6">file_get_contents(</span> $file<span style="color:#5CF08A">[</span><span style="color:#EEF597">&#x27;tmp_name&#x27;</span><span style="color:#5CF08A">]</span> <span style="color:#96E6F6">)</span>;</div>
<div class="cl" style="left:0;top:2461.21px;-webkit-text-stroke:1px currentColor"></div>
<div class="cl" style="left:0;top:2480.00px;-webkit-text-stroke:1px currentColor">        <span style="color:#F284C4">if</span> <span style="color:#96E6F6">(</span> <span style="color:#F284C4">!</span> $import_data <span style="color:#96E6F6">)</span> <span style="color:#96E6F6">{</span></div>
<div class="cl" style="left:0;top:2498.79px;-webkit-text-stroke:1px currentColor">            <span style="color:#5CF08A">wp_send_json_error(</span> <span style="color:#BA98F6">[</span> <span style="color:#EEF597">&#x27;message&#x27;</span> <span style="color:#F284C4">=&gt;</span> <span style="color:#5CF08A">esc_html__</span><span style="color:#F9BA76">(</span> <span style="color:#EEF597">&#x27;Invalid file, the file is empty&#x27;</span>, <span style="color:#EEF597">&#x27;wc-price-history&#x27;</span> <span style="color:#F9BA76">)</span> <span style="color:#BA98F6">]</span> <span style="color:#5CF08A">)</span>;</div>
<div class="cl" style="left:0;top:2517.58px;-webkit-text-stroke:1px currentColor">        <span style="color:#96E6F6">}</span></div>
<div class="cl" style="left:0;top:2536.36px;-webkit-text-stroke:1px currentColor"></div>
<div class="cl" style="left:0;top:2555.15px;-webkit-text-stroke:1px currentColor">        $import_data <span style="color:#F284C4">=</span> <span style="color:#96E6F6">json_decode(</span> $import_data, <span style="color:#BA98F6">true</span> <span style="color:#96E6F6">)</span>;</div>
<div class="cl" style="left:0;top:2573.94px;-webkit-text-stroke:1px currentColor">        $import_data <span style="color:#F284C4">=</span> <span style="color:#5CF08A">maybe_unserialize</span><span style="color:#96E6F6">(</span> $import_data<span style="color:#5CF08A">[</span><span style="color:#EEF597">&#x27;serialized&#x27;</span><span style="color:#5CF08A">]</span> <span style="color:#96E6F6">)</span>;</div>
<div class="cl" style="left:0;top:2592.73px;-webkit-text-stroke:1px currentColor"></div>
<div class="cl" style="left:0;top:2611.52px;-webkit-text-stroke:1px currentColor">        <span style="color:#F284C4">if</span> <span style="color:#96E6F6">(</span> <span style="color:#F284C4">!</span> $import_data <span style="color:#96E6F6">)</span> <span style="color:#96E6F6">{</span></div>
<div class="cl" style="left:0;top:2630.30px;-webkit-text-stroke:1px currentColor">            <span style="color:#5CF08A">wp_send_json_error(</span> <span style="color:#BA98F6">[</span> <span style="color:#EEF597">&#x27;message&#x27;</span> <span style="color:#F284C4">=&gt;</span> <span style="color:#5CF08A">esc_html__</span><span style="color:#F9BA76">(</span> <span style="color:#EEF597">&#x27;Invalid file, the file is not a valid JSON&#x27;</span>, <span style="color:#EEF597">&#x27;wc-price-history&#x27;</span> <span style="color:#F9BA76">)</span> <span style="color:#BA98F6">]</span> <span style="color:#5CF08A">)</span>;</div>
<div class="cl" style="left:0;top:2649.09px;-webkit-text-stroke:1px currentColor">        <span style="color:#96E6F6">}</span></div>
<div class="cl" style="left:0;top:2667.88px;-webkit-text-stroke:1px currentColor"></div>
<div class="cl" style="left:0;top:2686.67px;-webkit-text-stroke:1px currentColor">        <span style="color:#F284C4">if</span> <span style="color:#96E6F6">(</span> $settings_override <span style="color:#96E6F6">)</span> <span style="color:#96E6F6">{</span></div>
<div class="cl" style="left:0;top:2705.45px;-webkit-text-stroke:1px currentColor">            $settings <span style="color:#F284C4">=</span> $import_data<span style="color:#5CF08A">[</span><span style="color:#EEF597">&#x27;settings&#x27;</span><span style="color:#5CF08A">]</span>;</div>
<div class="cl" style="left:0;top:2724.24px;-webkit-text-stroke:1px currentColor">            <span style="color:#BA98F6">$this</span><span style="color:#F284C4">-&gt;</span>settings_data<span style="color:#F284C4">-&gt;</span><span style="color:#5CF08A">set_all_settings(</span> $settings <span style="color:#5CF08A">)</span>;</div>
<div class="cl" style="left:0;top:2743.03px;-webkit-text-stroke:1px currentColor">        <span style="color:#96E6F6">}</span></div>
<div class="cl" style="left:0;top:2761.82px;-webkit-text-stroke:1px currentColor"></div>
<div class="cl" style="left:0;top:2780.61px;-webkit-text-stroke:1px currentColor">        $is_variable_product <span style="color:#F284C4">=</span> <span style="color:#96E6F6">isset(</span> $import_data<span style="color:#5CF08A">[</span><span style="color:#EEF597">&#x27;variations&#x27;</span><span style="color:#5CF08A">]</span> <span style="color:#96E6F6">)</span> <span style="color:#F284C4">&amp;&amp;</span> <span style="color:#96E6F6">is_array(</span> $import_data<span style="color:#5CF08A">[</span><span style="color:#EEF597">&#x27;variations&#x27;</span><span style="color:#5CF08A">]</span> <span style="color:#96E6F6">)</span>;</div>
<div class="cl" style="left:0;top:2799.39px;-webkit-text-stroke:1px currentColor"></div>
<div class="cl" style="left:0;top:2818.18px;-webkit-text-stroke:1px currentColor">        <span style="color:#6C76A8">// Create the variable product.</span></div>
<div class="cl" style="left:0;top:2836.97px;-webkit-text-stroke:1px currentColor">        $product <span style="color:#F284C4">=</span> $is_variable_product <span style="color:#F284C4">?</span> <span style="color:#F284C4">new</span> <span style="color:#96E6F6">\WC_Product_Variable()</span> <span style="color:#F284C4">:</span> <span style="color:#F284C4">new</span> <span style="color:#96E6F6">\WC_Product()</span>;</div>
<div class="cl" style="left:0;top:2855.76px;-webkit-text-stroke:1px currentColor"></div>
<div class="cl" style="left:0;top:2874.55px;-webkit-text-stroke:1px currentColor">        $product<span style="color:#F284C4">-&gt;</span><span style="color:#5CF08A">set_name</span><span style="color:#96E6F6">(</span> $import_data<span style="color:#5CF08A">[</span><span style="color:#EEF597">&#x27;product&#x27;</span><span style="color:#5CF08A">][</span><span style="color:#EEF597">&#x27;product_name&#x27;</span><span style="color:#5CF08A">]</span> <span style="color:#F284C4">.</span> <span style="color:#EEF597">&#x27; - imported at &#x27;</span> <span style="color:#F284C4">.</span> <span style="color:#96E6F6">date</span><span style="color:#5CF08A">(</span> <span style="color:#EEF597">&#x27;Y-m-d H:i:s&#x27;</span> <span style="color:#5CF08A">)</span> <span style="color:#96E6F6">)</span>;</div>
<div class="cl" style="left:0;top:2893.33px;-webkit-text-stroke:1px currentColor">        $product<span style="color:#F284C4">-&gt;</span><span style="color:#5CF08A">set_status</span><span style="color:#96E6F6">(</span> <span style="color:#EEF597">&#x27;publish&#x27;</span> <span style="color:#96E6F6">)</span>;</div>
<div class="cl" style="left:0;top:2912.12px;-webkit-text-stroke:1px currentColor">        $product<span style="color:#F284C4">-&gt;</span><span style="color:#5CF08A">set_catalog_visibility</span><span style="color:#96E6F6">(</span> <span style="color:#EEF597">&#x27;visible&#x27;</span> <span style="color:#96E6F6">)</span>;</div>
<div class="cl" style="left:0;top:2930.91px;-webkit-text-stroke:1px currentColor"></div>
<div class="cl" style="left:0;top:2949.70px;-webkit-text-stroke:1px currentColor">        <span style="color:#F284C4">if</span> <span style="color:#96E6F6">(</span> $product_override <span style="color:#96E6F6">)</span> <span style="color:#96E6F6">{</span></div>
<div class="cl" style="left:0;top:2968.48px;-webkit-text-stroke:1px currentColor">            $product<span style="color:#F284C4">-&gt;</span><span style="color:#5CF08A">set_id(</span> $import_data<span style="color:#BA98F6">[</span><span style="color:#EEF597">&#x27;product&#x27;</span><span style="color:#BA98F6">][</span><span style="color:#EEF597">&#x27;product_id&#x27;</span><span style="color:#BA98F6">]</span> <span style="color:#5CF08A">)</span>;</div>
<div class="cl" style="left:0;top:2987.27px;-webkit-text-stroke:1px currentColor">        <span style="color:#96E6F6">}</span></div>
<div class="cl" style="left:0;top:3006.06px;-webkit-text-stroke:1px currentColor"></div>
<div class="cl" style="left:0;top:3024.85px;-webkit-text-stroke:1px currentColor">        <span style="color:#F284C4">if</span> <span style="color:#96E6F6">(</span> $import_data<span style="color:#5CF08A">[</span><span style="color:#EEF597">&#x27;product&#x27;</span><span style="color:#5CF08A">][</span><span style="color:#EEF597">&#x27;regular_price&#x27;</span><span style="color:#5CF08A">]</span> <span style="color:#96E6F6">)</span> <span style="color:#96E6F6">{</span></div>
<div class="cl" style="left:0;top:3043.64px;-webkit-text-stroke:1px currentColor">            $product<span style="color:#F284C4">-&gt;</span><span style="color:#5CF08A">set_regular_price(</span> $import_data<span style="color:#BA98F6">[</span><span style="color:#EEF597">&#x27;product&#x27;</span><span style="color:#BA98F6">][</span><span style="color:#EEF597">&#x27;regular_price&#x27;</span><span style="color:#BA98F6">]</span> <span style="color:#5CF08A">)</span>;</div>
<div class="cl" style="left:0;top:3062.42px;-webkit-text-stroke:1px currentColor">        <span style="color:#96E6F6">}</span></div>
<div class="cl" style="left:0;top:3081.21px;-webkit-text-stroke:1px currentColor"></div>
<div class="cl" style="left:0;top:3100.00px;-webkit-text-stroke:1px currentColor">        <span style="color:#F284C4">if</span> <span style="color:#96E6F6">(</span> $import_data<span style="color:#5CF08A">[</span><span style="color:#EEF597">&#x27;product&#x27;</span><span style="color:#5CF08A">][</span><span style="color:#EEF597">&#x27;sale_price&#x27;</span><span style="color:#5CF08A">]</span> <span style="color:#96E6F6">)</span> <span style="color:#96E6F6">{</span></div>
<div class="cl" style="left:0;top:3118.79px;-webkit-text-stroke:1px currentColor">            $product<span style="color:#F284C4">-&gt;</span><span style="color:#5CF08A">set_sale_price(</span> $import_data<span style="color:#BA98F6">[</span><span style="color:#EEF597">&#x27;product&#x27;</span><span style="color:#BA98F6">][</span><span style="color:#EEF597">&#x27;sale_price&#x27;</span><span style="color:#BA98F6">]</span> <span style="color:#5CF08A">)</span>;</div>
<div class="cl" style="left:0;top:3137.58px;-webkit-text-stroke:1px currentColor">        <span style="color:#96E6F6">}</span></div>
<div class="cl" style="left:0;top:3156.36px;-webkit-text-stroke:1px currentColor"></div>
<div class="cl" style="left:0;top:3175.15px;-webkit-text-stroke:1px currentColor">        <span style="color:#6C76A8">// Set product attributes.</span></div>
<div class="cl" style="left:0;top:3193.94px;-webkit-text-stroke:1px currentColor">        $product<span style="color:#F284C4">-&gt;</span><span style="color:#5CF08A">set_attributes</span><span style="color:#96E6F6">(</span> $import_data<span style="color:#5CF08A">[</span><span style="color:#EEF597">&#x27;product&#x27;</span><span style="color:#5CF08A">][</span><span style="color:#EEF597">&#x27;attributes&#x27;</span><span style="color:#5CF08A">]</span> <span style="color:#96E6F6">)</span>;</div>
<div class="cl" style="left:0;top:3212.73px;-webkit-text-stroke:1px currentColor"></div>
<div class="cl" style="left:0;top:3231.52px;-webkit-text-stroke:1px currentColor">        $product_id <span style="color:#F284C4">=</span> $product<span style="color:#F284C4">-&gt;</span><span style="color:#5CF08A">save</span><span style="color:#96E6F6">()</span>;</div>
<div class="cl" style="left:0;top:3250.30px;-webkit-text-stroke:1px currentColor"></div>
<div class="cl" style="left:0;top:3269.09px;-webkit-text-stroke:1px currentColor">        <span style="color:#F284C4">if</span> <span style="color:#96E6F6">(</span> <span style="color:#F284C4">!</span> $product_id <span style="color:#96E6F6">)</span> <span style="color:#96E6F6">{</span></div>
<div class="cl" style="left:0;top:3287.88px;-webkit-text-stroke:1px currentColor">            <span style="color:#5CF08A">wp_send_json_error(</span> <span style="color:#BA98F6">[</span> <span style="color:#EEF597">&#x27;message&#x27;</span> <span style="color:#F284C4">=&gt;</span> <span style="color:#5CF08A">esc_html__</span><span style="color:#F9BA76">(</span> <span style="color:#EEF597">&#x27;Product not saved&#x27;</span>, <span style="color:#EEF597">&#x27;wc-price-history&#x27;</span> <span style="color:#F9BA76">)</span> <span style="color:#BA98F6">]</span> <span style="color:#5CF08A">)</span>;</div>
<div class="cl" style="left:0;top:3306.67px;-webkit-text-stroke:1px currentColor">        <span style="color:#96E6F6">}</span></div>
<div class="cl" style="left:0;top:3325.45px;-webkit-text-stroke:1px currentColor"></div>
<div class="cl" style="left:0;top:3344.24px;-webkit-text-stroke:1px currentColor">        <span style="color:#6C76A8">// Create history.</span></div>
<div class="cl" style="left:0;top:3363.03px;-webkit-text-stroke:1px currentColor">        <span style="color:#BA98F6">$this</span><span style="color:#F284C4">-&gt;</span>history_storage<span style="color:#F284C4">-&gt;</span><span style="color:#5CF08A">save_history</span><span style="color:#96E6F6">(</span> $product_id, $import_data<span style="color:#5CF08A">[</span><span style="color:#EEF597">&#x27;product&#x27;</span><span style="color:#5CF08A">][</span><span style="color:#EEF597">&#x27;history&#x27;</span><span style="color:#5CF08A">]</span> <span style="color:#96E6F6">)</span>;</div>
<div class="cl" style="left:0;top:3381.82px;-webkit-text-stroke:1px currentColor"></div>
<div class="cl" style="left:0;top:3400.61px;-webkit-text-stroke:1px currentColor">        <span style="color:#6C76A8">// Create variations.</span></div>
<div class="cl" style="left:0;top:3419.39px;-webkit-text-stroke:1px currentColor">        <span style="color:#F284C4">if</span> <span style="color:#96E6F6">(</span> $is_variable_product <span style="color:#96E6F6">)</span> <span style="color:#96E6F6">{</span></div>
<div class="cl" style="left:0;top:3438.18px;-webkit-text-stroke:1px currentColor">            <span style="color:#F284C4">foreach</span> <span style="color:#5CF08A">(</span> $import_data<span style="color:#BA98F6">[</span><span style="color:#EEF597">&#x27;variations&#x27;</span><span style="color:#BA98F6">]</span> <span style="color:#F284C4">as</span> $variation <span style="color:#5CF08A">)</span> <span style="color:#5CF08A">{</span></div>
<div class="cl" style="left:0;top:3456.97px;-webkit-text-stroke:1px currentColor">                $variation_product <span style="color:#F284C4">=</span> <span style="color:#F284C4">new</span> <span style="color:#96E6F6">\WC_Product_Variation</span><span style="color:#BA98F6">()</span>;</div>
<div class="cl" style="left:0;top:3475.76px;-webkit-text-stroke:1px currentColor"></div>
<div class="cl" style="left:0;top:3494.55px;-webkit-text-stroke:1px currentColor">                $variation_product<span style="color:#F284C4">-&gt;</span><span style="color:#5CF08A">set_name</span><span style="color:#BA98F6">(</span> $variation<span style="color:#F9BA76">[</span><span style="color:#EEF597">&#x27;product_name&#x27;</span><span style="color:#F9BA76">]</span> <span style="color:#BA98F6">)</span>;</div>
<div class="cl" style="left:0;top:3513.33px;-webkit-text-stroke:1px currentColor">                $variation_product<span style="color:#F284C4">-&gt;</span><span style="color:#5CF08A">set_status</span><span style="color:#BA98F6">(</span> <span style="color:#EEF597">&#x27;publish&#x27;</span> <span style="color:#BA98F6">)</span>;</div>
<div class="cl" style="left:0;top:3532.12px;-webkit-text-stroke:1px currentColor">                $variation_product<span style="color:#F284C4">-&gt;</span><span style="color:#5CF08A">set_regular_price</span><span style="color:#BA98F6">(</span> $variation<span style="color:#F9BA76">[</span><span style="color:#EEF597">&#x27;regular_price&#x27;</span><span style="color:#F9BA76">]</span> <span style="color:#BA98F6">)</span>;</div>
<div class="cl" style="left:0;top:3550.91px;-webkit-text-stroke:1px currentColor">                $variation_product<span style="color:#F284C4">-&gt;</span><span style="color:#5CF08A">set_parent_id</span><span style="color:#BA98F6">(</span> $product_id <span style="color:#BA98F6">)</span>;</div>
<div class="cl" style="left:0;top:3569.70px;-webkit-text-stroke:1px currentColor"></div>
<div class="cl" style="left:0;top:3588.48px;-webkit-text-stroke:1px currentColor">                $variation_product<span style="color:#F284C4">-&gt;</span><span style="color:#5CF08A">set_attributes</span><span style="color:#BA98F6">(</span> $variation<span style="color:#F9BA76">[</span><span style="color:#EEF597">&#x27;attributes&#x27;</span><span style="color:#F9BA76">]</span> <span style="color:#BA98F6">)</span>;</div>
<div class="cl" style="left:0;top:3607.27px;-webkit-text-stroke:1px currentColor"></div>
<div class="cl" style="left:0;top:3626.06px;-webkit-text-stroke:1px currentColor">                <span style="color:#F284C4">if</span> <span style="color:#BA98F6">(</span> $variation<span style="color:#F9BA76">[</span><span style="color:#EEF597">&#x27;sale_price&#x27;</span><span style="color:#F9BA76">]</span> <span style="color:#BA98F6">)</span> <span style="color:#BA98F6">{</span></div>
<div class="cl" style="left:0;top:3644.85px;-webkit-text-stroke:1px currentColor">                    $variation_product<span style="color:#F284C4">-&gt;</span><span style="color:#5CF08A">set_sale_price</span><span style="color:#F9BA76">(</span> $variation[<span style="color:#EEF597">&#x27;sale_price&#x27;</span>] <span style="color:#F9BA76">)</span>;</div>
<div class="cl" style="left:0;top:3663.64px;-webkit-text-stroke:1px currentColor">                <span style="color:#BA98F6">}</span></div>
<div class="cl" style="left:0;top:3682.42px;-webkit-text-stroke:1px currentColor"></div>
<div class="cl" style="left:0;top:3701.21px;-webkit-text-stroke:1px currentColor">                <span style="color:#F284C4">if</span> <span style="color:#BA98F6">(</span> $product_override <span style="color:#BA98F6">)</span> <span style="color:#BA98F6">{</span></div>
<div class="cl" style="left:0;top:3720.00px;-webkit-text-stroke:1px currentColor">                    $variation_product<span style="color:#F284C4">-&gt;</span><span style="color:#5CF08A">set_id</span><span style="color:#F9BA76">(</span> $variation[<span style="color:#EEF597">&#x27;product_id&#x27;</span>] <span style="color:#F9BA76">)</span>;</div>
<div class="cl" style="left:0;top:3738.79px;-webkit-text-stroke:1px currentColor">                <span style="color:#BA98F6">}</span></div>
<div class="cl" style="left:0;top:3757.58px;-webkit-text-stroke:1px currentColor"></div>
<div class="cl" style="left:0;top:3776.36px;-webkit-text-stroke:1px currentColor">                $variation_id <span style="color:#F284C4">=</span> $variation_product<span style="color:#F284C4">-&gt;</span><span style="color:#5CF08A">save</span><span style="color:#BA98F6">()</span>;</div>
<div class="cl" style="left:0;top:3795.15px;-webkit-text-stroke:1px currentColor"></div>
<div class="cl" style="left:0;top:3813.94px;-webkit-text-stroke:1px currentColor">                <span style="color:#BA98F6">$this</span><span style="color:#F284C4">-&gt;</span>history_storage<span style="color:#F284C4">-&gt;</span><span style="color:#5CF08A">save_history</span><span style="color:#BA98F6">(</span> $variation_id, $variation<span style="color:#F9BA76">[</span><span style="color:#EEF597">&#x27;history&#x27;</span><span style="color:#F9BA76">]</span> <span style="color:#BA98F6">)</span>;</div>
<div class="cl" style="left:0;top:3832.73px;-webkit-text-stroke:1px currentColor">            <span style="color:#5CF08A">}</span></div>
<div class="cl" style="left:0;top:3851.52px;-webkit-text-stroke:1px currentColor"></div>
<div class="cl" style="left:0;top:3870.30px;-webkit-text-stroke:1px currentColor">            \WC_Product_Variable<span style="color:#F284C4">::</span><span style="color:#96E6F6">sync</span><span style="color:#5CF08A">(</span> $product_id <span style="color:#5CF08A">)</span>;</div>
<div class="cl" style="left:0;top:3889.09px;-webkit-text-stroke:1px currentColor">        <span style="color:#96E6F6">}</span></div>
<div class="cl" style="left:0;top:3907.88px;-webkit-text-stroke:1px currentColor"></div>
<div class="cl" style="left:0;top:3926.67px;-webkit-text-stroke:1px currentColor">        <span style="color:#5CF08A">wp_send_json_success</span><span style="color:#96E6F6">()</span>;</div>
<div class="cl" style="left:0;top:3945.45px;-webkit-text-stroke:1px currentColor">    <span style="color:#F284C4">}</span></div>
<div class="cl" style="left:0;top:3964.24px;-webkit-text-stroke:1px currentColor">}</div>
</div></div>
<div class="abs" style="left:1745.9px;top:201.3px;width:8px;height:977.9px;background:linear-gradient(to left, rgba(0,0,0,0.28), rgba(0,0,0,0))"></div>
<div class="abs" style="left:1941px;top:201.3px;width:19px;height:977.9px;background:#282A36"></div>
<div class="abs" style="left:1940px;top:610.5px;width:20px;height:3.5px;background:#85868E"></div>
<div class="abs" style="left:271.5px;top:529.0px;width:1083.8px;height:35.9px;background:#FFFFFF"></div>
<div class="abs" style="left:269.8px;top:783.2px;width:372.2px;height:35.6px;background:#FFFFFF"></div>
<div class="abs" style="left:267.1px;top:944.2px;width:1403.8px;height:35.4px;background:#FFFFFF"></div>
<div class="abs" style="left:271.9px;top:571.3px;width:710.1px;height:36.6px;border:4.5px solid #E9331F;box-sizing:border-box"></div>
<div class="abs" style="left:268.5px;top:822.7px;width:624.5px;height:37.1px;border:4.5px solid #E9331F;box-sizing:border-box"></div>
<div class="abs" style="left:268.2px;top:989.0px;width:718.8px;height:63.8px;border:4.5px solid #E9331F;box-sizing:border-box"></div>
<div class="abs" style="left:87.5px;top:59px;width:1873px;height:1154px;border-radius:14px;box-sizing:border-box;border:1.5px solid rgba(165,164,172,0.72);border-bottom-color:rgba(140,140,148,0.6)"></div>
<svg width="2048" height="1328" viewBox="0 0 2048 1328"><circle cx="113" cy="86.5" r="9.3" fill="#FF5F57"/><circle cx="143.9" cy="86.5" r="9.3" fill="#FEBC2E"/><circle cx="174.8" cy="86.5" r="9.3" fill="#28C840"/><g fill="none" stroke-width="1.7" stroke-linecap="round" stroke-linejoin="round"><path d="M642.5 86.3 H624.5 M632.5 78.5 L624.5 86.3 L632.5 94.1" stroke="#E8E8EA"/><path d="M665.5 86.3 H683.2 M675.5 78.5 L683.2 86.3 L675.5 94.1" stroke="#8A8A90"/></g><rect x="707.5" y="68" width="713.5" height="35.5" rx="9" fill="#2C2C37" stroke="#5A5B66" stroke-width="2"/><g fill="none" stroke="#D8D8DC" stroke-width="1.5" stroke-linecap="round"><circle cx="950.8" cy="82" r="6.6"/><path d="M946.2 86.8 L938.5 95.3"/></g><text x="967.60" y="92.50" font-family='"Liberation Sans", sans-serif' font-weight="normal" font-size="19.10" fill="#E6E6E8" letter-spacing="-0.007" style="white-space:pre" stroke="#E6E6E8" stroke-width="0.25">Research-WordPress-CVE</text><ellipse cx="114.4" cy="139.8" rx="12.6" ry="6.8" fill="#3D8FE0"/><text x="114.4" y="143.3" text-anchor="middle" font-family="Liberation Sans, sans-serif" font-style="italic" font-weight="bold" font-size="9.5" fill="#0C3272" letter-spacing="-0.4" stroke="#0C3272" stroke-width="0.3">php</text><text x="137.00" y="147.60" font-family='"Liberation Sans", sans-serif' font-weight="normal" font-size="20.30" fill="#5CF08A" letter-spacing="0.552" style="white-space:pre" stroke="#5CF08A" stroke-width="0.45">Import.php</text><text transform="matrix(0.7642 0 0 1 248.60 147.60)" x="0" y="0" font-family='"Liberation Sans", sans-serif' font-weight="normal" font-size="20.30" fill="#52C873" style="white-space:pre" stroke="#52C873" stroke-width="0.9">U</text><path d="M276.6 133.6 L289 146 M289 133.6 L276.6 146" stroke="#EDEDED" stroke-width="1.6" stroke-linecap="round"/><g fill="none" stroke="#C8C8CC" stroke-width="1.6" stroke-linecap="round" stroke-linejoin="round"><path d="M1717.3 131.5 L1731.3 140.6 L1717.3 149.7 Z"/><path d="M1755.2 135.2 A10.3 10.3 0 1 1 1756.3 146.0"/><path d="M1754.9 130.8 V135.6 H1759.7"/><path d="M1764.6 134.3 V140.6 L1768.4 144.4"/><circle cx="1798.2" cy="133.5" r="2.6"/><circle cx="1811.8" cy="148.7" r="2.6"/><path d="M1798.2 136.1 V143.5 Q1798.2 148.7 1803.2 148.7 H1806.6"/><path d="M1803.9 145.8 L1806.9 148.7 L1803.9 151.6"/><path d="M1811.8 146.1 V138.4 Q1811.8 133.5 1806.8 133.5 H1803.6"/><path d="M1806.4 130.6 L1803.5 133.5 L1806.4 136.4"/><rect x="1836.6" y="129.9" width="19" height="18.8" rx="1.8"/><path d="M1846.1 129.9 V148.7"/><rect x="1876.9" y="139.9" width="17.5" height="10.6" rx="1.8"/><path d="M1880.4 139.9 V136 A5.3 5.3 0 0 1 1891 134.5"/></g><g fill="#C8C8CC"><circle cx="1917.8" cy="140" r="1.6"/><circle cx="1925.6" cy="140" r="1.6"/><circle cx="1933.4" cy="140" r="1.6"/></g><text x="112.14" y="191.40" font-family='"Liberation Sans", sans-serif' font-weight="normal" font-size="20.30" fill="#6F78A8" letter-spacing="-0.085" style="white-space:pre" >web</text><text x="175.80" y="191.40" font-family='"Liberation Sans", sans-serif' font-weight="normal" font-size="20.30" fill="#6F78A8" letter-spacing="-0.130" style="white-space:pre" >app</text><text x="235.74" y="191.40" font-family='"Liberation Sans", sans-serif' font-weight="normal" font-size="20.30" fill="#6F78A8" letter-spacing="0.906" style="white-space:pre" >wp-content</text><text x="369.50" y="191.40" font-family='"Liberation Sans", sans-serif' font-weight="normal" font-size="20.30" fill="#6F78A8" letter-spacing="0.345" style="white-space:pre" >plugins</text><text x="461.44" y="191.40" font-family='"Liberation Sans", sans-serif' font-weight="normal" font-size="20.30" fill="#6F78A8" letter-spacing="0.849" style="white-space:pre" >wc-price-history</text><text x="642.50" y="191.40" font-family='"Liberation Sans", sans-serif' font-weight="normal" font-size="20.30" fill="#6F78A8" letter-spacing="-0.180" style="white-space:pre" >app</text><text x="702.70" y="191.40" font-family='"Liberation Sans", sans-serif' font-weight="normal" font-size="20.30" fill="#6F78A8" letter-spacing="0.165" style="white-space:pre" >PriorPrice</text><text x="853.80" y="191.40" font-family='"Liberation Sans", sans-serif' font-weight="normal" font-size="20.30" fill="#6F78A8" letter-spacing="0.496" style="white-space:pre" >Import.php</text><g fill="none" stroke="#7C7F93" stroke-width="1.3" stroke-linecap="round" stroke-linejoin="round"><path d="M159.2 178.6 L166.6 185.2 L159.2 191.8"/><path d="M219.2 178.6 L226.6 185.2 L219.2 191.8"/><path d="M353.5 178.6 L360.9 185.2 L353.5 191.8"/><path d="M445.6 178.6 L453.0 185.2 L445.6 191.8"/><path d="M626.5 178.6 L633.9 185.2 L626.5 191.8"/><path d="M686.4 178.6 L693.8 185.2 L686.4 191.8"/><path d="M803.0 178.6 L810.4 185.2 L803.0 191.8"/></g><ellipse cx="831.2" cy="184.7" rx="12.3" ry="6.6" fill="#3D8FE0"/><text x="831.2" y="188.1" text-anchor="middle" font-family="Liberation Sans, sans-serif" font-style="italic" font-weight="bold" font-size="9.3" fill="#0C3272" letter-spacing="-0.4" stroke="#0C3272" stroke-width="0.3">php</text><text transform="matrix(0.9421 0 0 1 1544.20 1203.80)" x="0" y="0" font-family='"Liberation Sans", sans-serif' font-weight="normal" font-size="19.80" fill="#EDEDEF" style="white-space:pre" stroke="#EDEDEF" stroke-width="0.3">105,</text><text x="1610.10" y="1203.80" font-family='"Liberation Sans", sans-serif' font-weight="normal" font-size="19.80" fill="#EDEDEF" letter-spacing="-0.018" style="white-space:pre" stroke="#EDEDEF" stroke-width="0.3">20</text><text transform="matrix(0.9180 0 0 1 1658.30 1203.80)" x="0" y="0" font-family='"Liberation Sans", sans-serif' font-weight="normal" font-size="19.80" fill="#EDEDEF" style="white-space:pre" stroke="#EDEDEF" stroke-width="0.3">Tab</text><text x="1727.80" y="1203.80" font-family='"Liberation Sans", sans-serif' font-weight="normal" font-size="19.80" fill="#EDEDEF" letter-spacing="0.000" style="white-space:pre" stroke="#EDEDEF" stroke-width="0.3">:</text><text x="1736.40" y="1203.80" font-family='"Liberation Sans", sans-serif' font-weight="normal" font-size="19.80" fill="#EDEDEF" letter-spacing="0.000" style="white-space:pre" stroke="#EDEDEF" stroke-width="0.3">4</text><text transform="matrix(0.9769 0 0 1 1774.50 1203.80)" x="0" y="0" font-family='"Liberation Sans", sans-serif' font-weight="normal" font-size="19.80" fill="#EDEDEF" style="white-space:pre" stroke="#EDEDEF" stroke-width="0.3">UTF-8</text><text transform="matrix(0.8439 0 0 1 1855.70 1203.80)" x="0" y="0" font-family='"Liberation Sans", sans-serif' font-weight="normal" font-size="19.80" fill="#EDEDEF" style="white-space:pre" stroke="#EDEDEF" stroke-width="0.3">LF</text><text transform="matrix(0.8745 0 0 1 1901.60 1203.80)" x="0" y="0" font-family='"Liberation Sans", sans-serif' font-weight="normal" font-size="19.80" fill="#EDEDEF" style="white-space:pre" stroke="#EDEDEF" stroke-width="0.3">PHP</text><g fill="none" stroke="#EDEDEF" stroke-width="1.45" stroke-linecap="butt" stroke-linejoin="miter"><path d="M1522.8 1190.2 H1534.4 M1528.6 1190.2 Q1527.6 1194.2 1521.6 1195.6 M1528.6 1190.2 Q1529.6 1194.2 1535.6 1195.6 M1520.8 1197.0 H1536.4 M1528.6 1197.0 V1199.4 M1523.3 1199.6 H1533.7 V1201.8 H1523.6 V1204.1 H1534.6"/><circle cx="1592.8" cy="1193.1" r="3.2"/><path d="M1601.4 1188.6 V1197.6 M1597.4 1191.5 H1601.4 M1597.4 1195.0 H1601.4 M1591.2 1199.4 H1601.9 V1201.7 H1591.5 V1204.0 H1602.6"/><path d="M1696.1 1190.9 H1705.4 Q1705.6 1196 1704.2 1198.6 M1696.5 1195.3 H1705.0 M1694.2 1201.9 H1709.6"/><path d="M1711.3 1190.9 H1717.9 Q1717.6 1198 1711.0 1202.0 M1723.2 1188.7 V1204.5"/></g><text x="274.60" y="556.60" font-family='"Liberation Sans", sans-serif' font-weight="bold" font-size="26.80" fill="#E9331F" letter-spacing="-0.280" style="white-space:pre" >1. Retrieve the request payload wc_price_history_import_file containing the JSON file.</text><text x="272.60" y="810.00" font-family='"Liberation Sans", sans-serif' font-weight="bold" font-size="26.80" fill="#E9331F" letter-spacing="-0.318" style="white-space:pre" >2. Get the contents of the file.</text><text x="269.20" y="971.10" font-family='"Liberation Sans", sans-serif' font-weight="bold" font-size="26.80" fill="#E9331F" letter-spacing="-0.256" style="white-space:pre" >3. Convert the JSON format string to JSON data and perform deserialization on the data with the key &#x27;serialized&#x27;.</text></svg>
</body></html>
